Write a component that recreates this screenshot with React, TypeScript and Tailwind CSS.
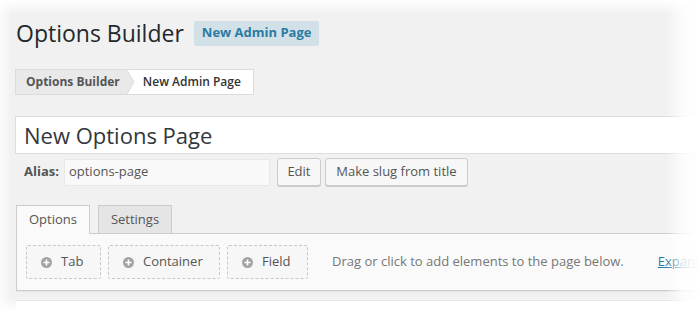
import React from "react";

function PlusIcon() {
  return (
    <svg width="11" height="11" viewBox="0 0 11 11" className="shrink-0">
      <circle cx="5.5" cy="5.5" r="5.5" fill="#a3a3a3" />
      <path d="M5.5 2.5v6M2.5 5.5h6" stroke="#ffffff" strokeWidth="1.6" />
    </svg>
  );
}

function AddBox({ label, w }: { label: string; w: string }) {
  return (
    <div
      className={`flex items-center gap-[9px] h-[34px] pl-[14px] border border-dashed border-[#c8c8c8] rounded-[2px] bg-[#f7f7f7] text-[13px] text-[#555] ${w}`}
    >
      <PlusIcon />
      <span>{label}</span>
    </div>
  );
}

export default function App() {
  return (
    <div
      className="relative w-[700px] h-[311px] overflow-hidden bg-[#f1f1f1]"
      style={{ fontFamily: '"Open Sans", "Noto Sans", sans-serif' }}
    >
      <div className="pl-[16px] pt-[17px]">
        {/* Header */}
        <div className="flex items-center h-[32px]">
          <h1 className="text-[23px] leading-[32px] text-[#23282d] font-normal">Options Builder</h1>
          <span className="ml-[10px] h-[25px] px-[8px] flex items-center rounded-[2px] bg-[#d2e0e7] text-[13px] font-bold text-[#2c7ba3]">
            New Admin Page
          </span>
        </div>

        {/* Breadcrumb */}
        <div className="mt-[20px] flex h-[26px] w-[239px] -ml-[1px] border border-[#dcdcdc] text-[12px]">
          <div className="relative flex items-center pl-[10px] pr-[8px] bg-[#e9e9e9] text-[#555] font-bold">
            Options Builder
            <svg className="absolute -right-[7px] top-0" width="8" height="24" viewBox="0 0 8 24">
              <path d="M0 0 L7 12 L0 24 Z" fill="#e9e9e9" />
              <path d="M0 0 L7 12 L0 24" fill="none" stroke="#dcdcdc" strokeWidth="1" />
            </svg>
          </div>
          <div className="flex-1 flex items-center pl-[15px] bg-white text-[#333] font-semibold">New Admin Page</div>
        </div>

        {/* Title input */}
        <div className="mt-[21px] -ml-[1px] h-[38px] w-[720px] bg-white border border-[#dddddd] flex items-center pl-[8px] text-[22px] text-[#32373c]">
          New Options Page
        </div>

        {/* Alias row */}
        <div className="mt-[4px] flex items-center h-[28px] text-[13px]">
          <span className="ml-[8px] font-bold text-[#555]">Alias:</span>
          <div className="ml-[5px] w-[206px] h-[27px] flex items-center pl-[4px] bg-[#f9f9f9] border border-[#e8e8e8] text-[#555]">
            options-page
          </div>
          <div className="ml-[7px] h-[28px] w-[44px] flex items-center justify-center bg-[#f7f7f7] border border-[#cccccc] rounded-[3px] text-[#555] shadow-[0_1px_0_#ccc]">
            Edit
          </div>
          <div className="ml-[4px] h-[28px] w-[143px] flex items-center justify-center bg-[#f7f7f7] border border-[#cccccc] rounded-[3px] text-[#555] shadow-[0_1px_0_#ccc]">
            Make slug from title
          </div>
        </div>

        {/* Tabs */}
        <div className="mt-[19px] flex items-end h-[28px] text-[13px]">
          <div className="relative z-10 h-[29px] w-[74px] flex items-center justify-center bg-[#fafafa] border border-b-0 border-[#cccccc] text-[#555] -mb-[1px]">
            Options
          </div>
          <div className="ml-[8px] h-[28px] w-[74px] flex items-center justify-center bg-[#e5e5e5] border border-b-0 border-[#cccccc] text-[#555]">
            Settings
          </div>
        </div>

        {/* Panel */}
        <div className="h-[58px] w-[720px] bg-[#fafafa] border border-[#cccccc] shadow-[0_1px_1px_rgba(0,0,0,0.04)] flex items-center pl-[9px] text-[13px]">
          <div className="flex gap-[7px]">
            <AddBox label="Tab" w="w-[75px]" />
            <AddBox label="Container" w="w-[112px]" />
            <AddBox label="Field" w="w-[81px]" />
          </div>
          <span className="ml-[24px] text-[#777]">Drag or click to add elements to the page below.</span>
          <span className="ml-[34px] text-[#2a7ea5] underline whitespace-nowrap">Expand all</span>
        </div>

        {/* Next box edge */}
        <div className="mt-[9px] h-[20px] w-[720px] bg-white border-t border-[#dddddd]" />
      </div>

      {/* Edge fades */}
      <div className="pointer-events-none absolute inset-x-0 top-0 h-[14px] bg-gradient-to-b from-white to-transparent" />
      <div className="pointer-events-none absolute inset-y-0 right-0 w-[34px] bg-gradient-to-l from-white via-white/80 to-transparent" />
      <div className="pointer-events-none absolute inset-y-0 left-0 w-[12px] bg-gradient-to-r from-white/70 to-transparent" />
      <div className="pointer-events-none absolute inset-x-0 bottom-0 h-[14px] bg-gradient-to-t from-white to-transparent" />
    </div>
  );
}
